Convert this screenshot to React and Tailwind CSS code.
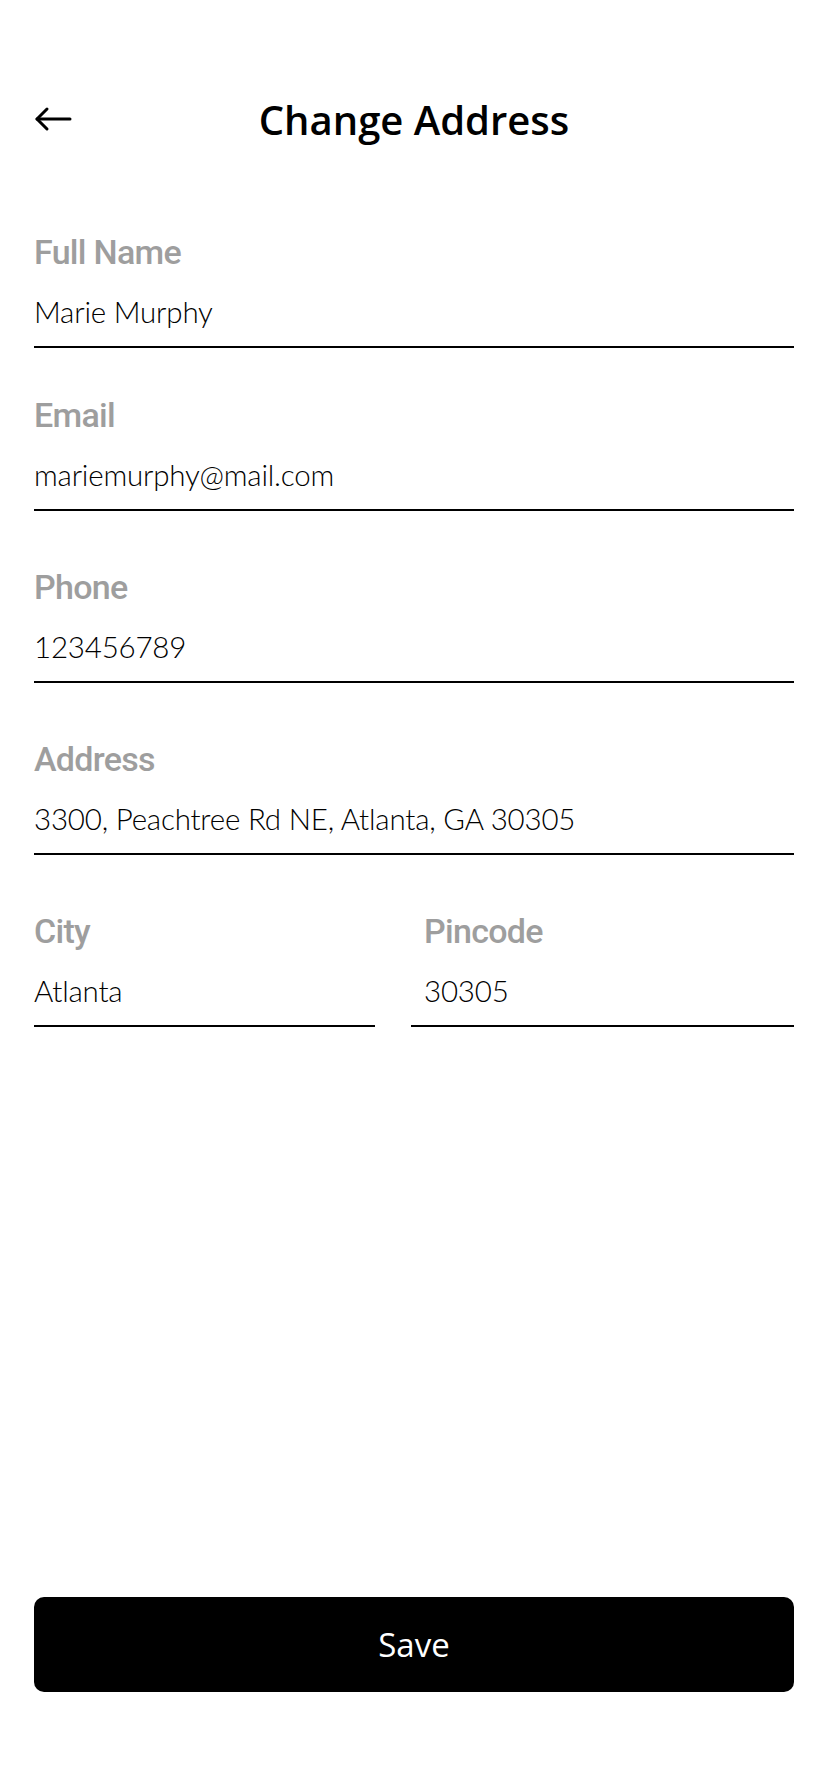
const Field = ({ label, value, className = '', textPad = '' }) => (
  <div className={`border-b-2 border-black pb-[14px] ${className}`}>
    <p className={`text-[34px] leading-[40px] font-medium text-[#9e9e9e] tracking-[-0.7px] ${textPad}`} style={{ fontFamily: 'Roboto, sans-serif' }}>
      {label}
    </p>
    <p className={`mt-[20px] text-[29.5px] leading-[40px] font-light text-black tracking-[-0.2px] ${textPad}`} style={{ fontFamily: 'Lato, sans-serif' }}>
      {value}
    </p>
  </div>
);

const App = () => {
  return (
    <div className="w-[828px] h-[1792px] bg-white flex flex-col px-[34px]" style={{ fontFamily: '"Open Sans", sans-serif' }}>
      <div className="mt-[90px] h-[60px] flex items-center">
        <svg width="38" height="30" viewBox="0 0 38 30" fill="none" stroke="black" strokeWidth="3" strokeLinecap="round" strokeLinejoin="round" className="-mt-[2px]">
          <path d="M36 15H3" />
          <path d="M13 5L3 15L13 25" />
        </svg>
        <h1 className="flex-1 text-center text-[40px] font-semibold text-black" style={{ fontFamily: '"Open Sans", sans-serif' }}>
          Change Address
        </h1>
        <div className="w-[38px]"></div>
      </div>

      <Field label="Full Name" value="Marie Murphy" className="mt-[82px]" />
      <Field label="Email" value="mariemurphy@mail.com" className="mt-[47px]" />
      <Field label="Phone" value="123456789" className="mt-[56px]" />
      <Field label="Address" value="3300, Peachtree Rd NE, Atlanta, GA 30305" className="mt-[56px]" />
      <div className="mt-[56px] flex gap-[36px]">
        <Field label="City" value="Atlanta" className="w-[341px]" />
        <Field label="Pincode" value="30305" className="flex-1" textPad="pl-[13px]" />
      </div>

      <div className="mt-auto mb-[100px]">
        <button className="w-full h-[95px] bg-black rounded-[10px] text-white text-[33px]" style={{ fontFamily: '"Open Sans", sans-serif' }}>
          Save
        </button>
      </div>
    </div>
  );
};

export default App;
